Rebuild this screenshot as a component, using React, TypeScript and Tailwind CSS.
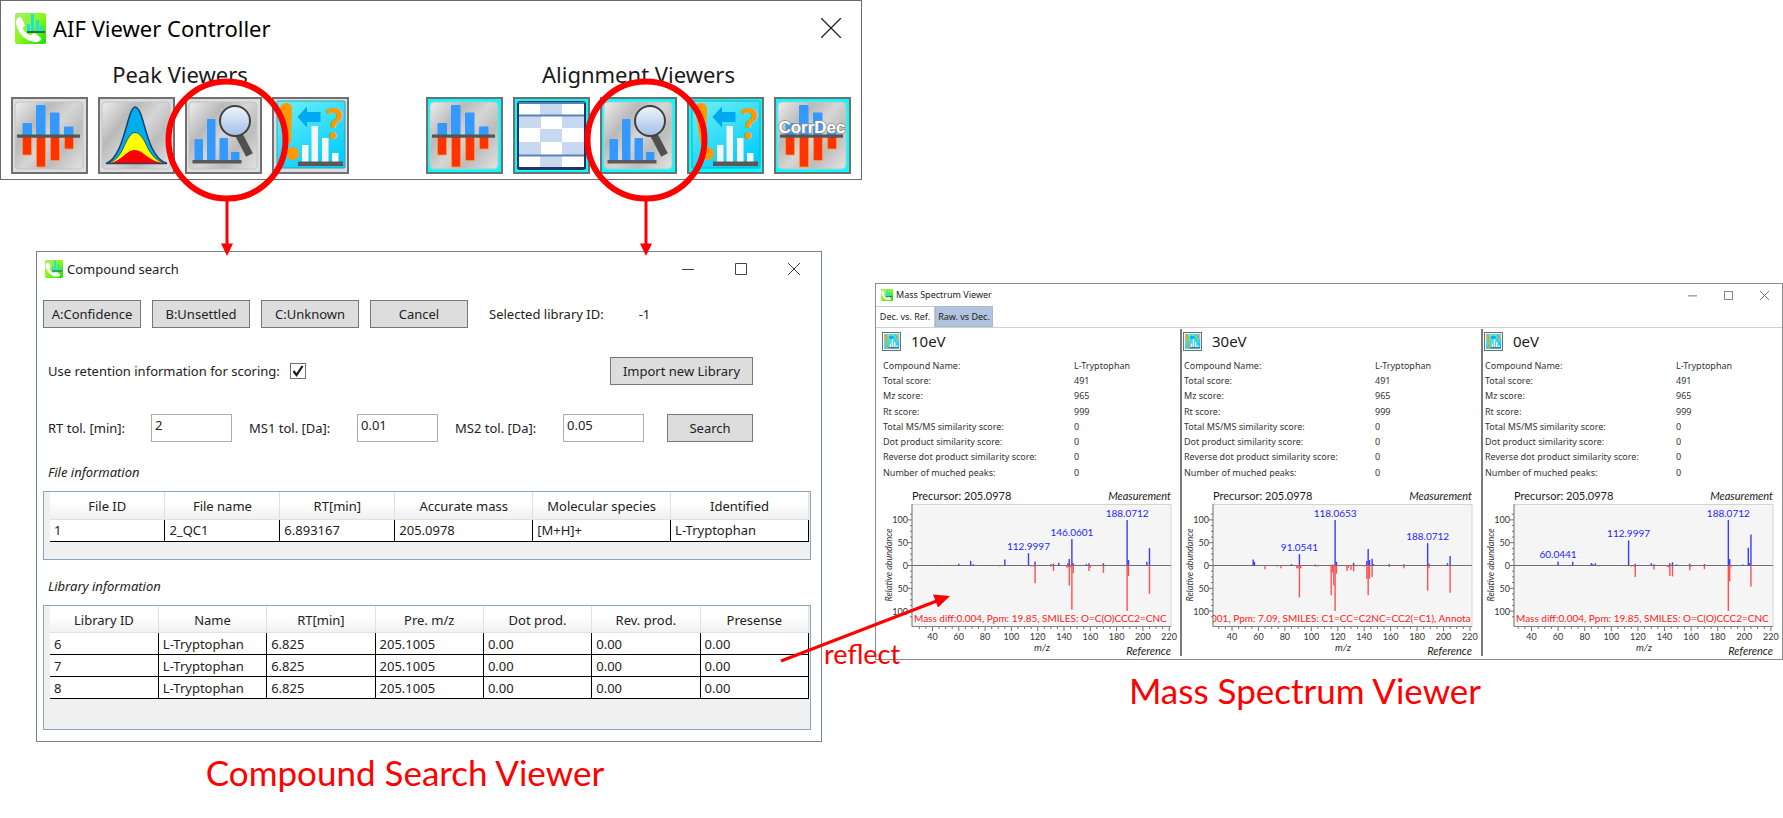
import React from "react";

const uiFont = "font-['Noto_Sans','Open_Sans',sans-serif]";
const captionFont = "font-['Lato','Open_Sans',sans-serif]";

/* ---------- Icons ---------- */

function AppIcon({ className }: { className: string }) {
  return (
    <svg viewBox="0 0 31 31" className={className} aria-hidden="true">
      <defs>
        <linearGradient id="appBg" x1="0" y1="0" x2="1" y2="1">
          <stop offset="0" stopColor="#a4f070" />
          <stop offset="0.5" stopColor="#8cf51c" />
          <stop offset="1" stopColor="#10e400" />
        </linearGradient>
      </defs>
      <rect width="31" height="31" rx="2" fill="url(#appBg)" />
      <path
        d="M2 6C4 3 6 4 7 6L10 12C10 14 7 14 8 16C10 20 13 22 16 22C18 22 18 19 20 20L26 25C27 27 24 29 21 29C11 29 2 20 1 9Z"
        fill="#ffffff"
      />
      <g fill="#17e3e3">
        <rect x="12" y="11" width="3" height="7" />
        <rect x="16" y="1" width="3" height="17" />
        <rect x="21" y="7" width="3" height="11" />
        <rect x="25" y="13" width="3" height="5" />
      </g>
      <rect x="12" y="18" width="18" height="2" fill="#2b6b4f" />
    </svg>
  );
}

function MetalPanel() {
  return (
    <>
      <defs>
        <linearGradient id="metal" x1="0" y1="0.1" x2="1" y2="0.9">
          <stop offset="0" stopColor="#e6e6e6" />
          <stop offset="0.28" stopColor="#b9b9b9" />
          <stop offset="0.5" stopColor="#d6d6d6" />
          <stop offset="0.72" stopColor="#bcbcbc" />
          <stop offset="1" stopColor="#dedede" />
        </linearGradient>
      </defs>
      <rect x="4" y="5" width="68" height="67" rx="4" fill="url(#metal)" stroke="#c4c4c4" strokeWidth="1" />
    </>
  );
}

function MirrorBars() {
  return (
    <>
      <g fill="#3399ff">
        <rect x="11.5" y="26" width="9.5" height="13" rx="1" />
        <rect x="25" y="8" width="9.5" height="31" rx="1" />
        <rect x="39" y="15.5" width="9.5" height="23" rx="1" />
        <rect x="53" y="29.5" width="9.5" height="9" rx="1" />
      </g>
      <g fill="#ff3300" stroke="#ff9a3d" strokeWidth="0.8">
        <rect x="11.5" y="39" width="9" height="19" rx="1" />
        <rect x="25.5" y="39" width="9" height="31" rx="1" />
        <rect x="39.5" y="39" width="9" height="24.5" rx="1" />
        <rect x="53.5" y="39" width="9" height="13" rx="1" />
      </g>
      <rect x="6" y="37.5" width="63" height="3.2" fill="#555555" />
    </>
  );
}

function SpectrumIcon() {
  return (
    <svg viewBox="0 0 77 77" className="size-full" aria-hidden="true">
      <MetalPanel />
      <MirrorBars />
    </svg>
  );
}

function PeakIcon() {
  return (
    <svg viewBox="0 0 77 77" className="size-full" aria-hidden="true">
      <MetalPanel />
      <path
        d="M8 66.500C20 62 25 42 30 24C33 13 35 10 37 10C39 10 42 13 45 24C50 42 55 62 69 66.500Z"
        fill="#00adee"
        stroke="#1f3d6e"
        strokeWidth="1.500"
      />
      <path
        d="M9 66.500C20 64 24 54 28 45C32 38 34 35.500 37 35.500C40 35.500 43 38 47 45C51 54 56 64 68 66.500Z"
        fill="#ffff00"
        stroke="#1f5a6e"
        strokeWidth="1"
      />
      <path d="M10 66.500C20 65 25 59 29 56C33 53 35 53 37 53C40 53 42 54 46 57C50 60 56 65 67 66.500Z" fill="#ff0000" />
      <rect x="8" y="65.500" width="61" height="1.500" fill="#1f3d6e" opacity="0.5" />
    </svg>
  );
}

function SearchIcon() {
  return (
    <svg viewBox="0 0 77 77" className="size-full" aria-hidden="true">
      <defs>
        <linearGradient id="lens" x1="0" y1="0" x2="0" y2="1">
          <stop offset="0" stopColor="#eff5fc" />
          <stop offset="1" stopColor="#a3bfe6" />
        </linearGradient>
      </defs>
      <MetalPanel />
      <g fill="#3399ff">
        <rect x="9.500" y="42" width="8.500" height="22" rx="1" />
        <rect x="22" y="22" width="8.500" height="42" rx="1" />
        <rect x="34.500" y="41" width="8.500" height="23" rx="1" />
        <rect x="46" y="55" width="8.500" height="9" rx="1" />
      </g>
      <rect x="7.500" y="63" width="49" height="3.500" fill="#5a5a5a" />
      <path d="M54 38L64.500 58" stroke="#505050" strokeWidth="7.500" />
      <circle cx="50" cy="24" r="15" fill="url(#lens)" stroke="#404040" strokeWidth="2" />
    </svg>
  );
}

function IdentifyIcon() {
  return (
    <svg viewBox="0 0 77 77" className="size-full" aria-hidden="true">
      <defs>
        <linearGradient id="aqua" x1="0" y1="0" x2="0.6" y2="1">
          <stop offset="0" stopColor="#6ef1f5" />
          <stop offset="1" stopColor="#08cdfc" />
        </linearGradient>
      </defs>
      <rect x="5" y="4" width="68" height="67" rx="1" fill="url(#aqua)" stroke="#2ba7b8" strokeWidth="1" />
      <path d="M8 12C8 4 20 4 20 12L19 44C18 48 14 48 13 44Z" fill="#ff9900" />
      <circle cx="20.500" cy="56.500" r="6.500" fill="#ff9900" />
      <path d="M25.500 20L35 9.500V15H48.500V25H35V30.500Z" fill="#00a8f0" />
      <g fill="#f5f5f5">
        <rect x="30" y="48" width="6.500" height="18" />
        <rect x="39.500" y="29" width="6.500" height="37" />
        <rect x="50" y="41" width="6.500" height="25" />
        <rect x="60" y="56" width="6.500" height="10" />
      </g>
      <rect x="26" y="64.500" width="45" height="4.500" fill="#585858" />
      <text x="62" y="42" textAnchor="middle" fill="#ff9900" className="font-['Lato',sans-serif] text-[42px] font-black">
        ?
      </text>
    </svg>
  );
}

function TableIcon() {
  const shaded = [
    [27, 6, 12],
    [6, 19, 12],
    [49, 19, 12],
    [27, 32, 13],
    [6, 45, 13],
    [49, 45, 13],
    [27, 59, 12],
  ];
  return (
    <svg viewBox="0 0 77 77" className="size-full" aria-hidden="true">
      <rect x="5" y="5" width="67" height="67" rx="2" fill="#ffffff" stroke="#1d3560" strokeWidth="2" />
      {shaded.map(([x, y, h]) => (
        <rect key={`${x}-${y}`} x={x} y={y} width="22" height={h} fill="#c6d9f1" />
      ))}
      <path d="M5 6H72M5 18.500H72M5 58.500H72" stroke="#5b82b5" strokeWidth="1.800" />
      <path d="M5 6V71H72V6" fill="none" stroke="#1d3560" strokeWidth="2" />
    </svg>
  );
}

function CorrDecIcon() {
  return (
    <svg viewBox="0 0 77 77" className="size-full" aria-hidden="true">
      <MetalPanel />
      <MirrorBars />
      <text
        x="38"
        y="36"
        textAnchor="middle"
        fill="#ffffff"
        stroke="#8a8a8a"
        strokeWidth="1.500"
        paintOrder="stroke"
        className="font-['Liberation_Sans',sans-serif] text-[17px] font-bold"
      >
        CorrDec
      </text>
    </svg>
  );
}

/* ---------- Annotations ---------- */

function Callout({ className }: { className: string }) {
  return (
    <svg
      viewBox="0 0 124 180"
      className={`pointer-events-none absolute z-10 h-[180px] w-[124px] max-w-none ${className}`}
      aria-hidden="true"
    >
      <circle cx="62" cy="62" r="58.500" fill="none" stroke="#ff0000" strokeWidth="6" />
      <path d="M62 122V167" stroke="#ff0000" strokeWidth="3" />
      <path d="M56 165.500H68L62 178Z" fill="#ff0000" />
    </svg>
  );
}

/* ---------- AIF Viewer Controller ---------- */

type Tool = { label: string; icon: React.ReactNode; callout?: string };

function ToolGroup({ title, tools, face }: { title: string; tools: Tool[]; face: string }) {
  return (
    <section className="flex flex-col items-center">
      <h2 className="mb-1 text-[22px] leading-[38px] text-[#1a1a1a]">{title}</h2>
      <div className="flex gap-2.5">
        {tools.map((tool) => (
          <div key={tool.label} className="relative size-[77px]">
            <button type="button" aria-label={tool.label} className={`block size-full border-2 border-[#707070] ${face}`}>
              <span className="-m-0.5 block">{tool.icon}</span>
            </button>
            {tool.callout && <Callout className={tool.callout} />}
          </div>
        ))}
      </div>
    </section>
  );
}

function ControllerWindow() {
  return (
    <section className="border border-[#6b6b6b] bg-white px-2.5 pb-[5px]">
      <header className="flex h-[54px] items-center gap-[7px] pr-2.5 pl-1">
        <AppIcon className="size-[31px]" />
        <h1 className="flex-1 text-[22px] text-black">AIF Viewer Controller</h1>
        <button type="button" aria-label="Close">
          <svg viewBox="0 0 20 20" className="size-5" aria-hidden="true">
            <path d="M0 0L20 20M20 0L0 20" stroke="#222222" strokeWidth="1.300" />
          </svg>
        </button>
      </header>
      <div className="flex justify-between">
        <ToolGroup
          title="Peak Viewers"
          face="bg-[#dddddd]"
          tools={[
            { label: "Spectrum", icon: <SpectrumIcon /> },
            { label: "Chromatogram", icon: <PeakIcon /> },
            { label: "Compound search", icon: <SearchIcon />, callout: "-top-[19px] -left-5" },
            { label: "Identification", icon: <IdentifyIcon /> },
          ]}
        />
        <ToolGroup
          title="Alignment Viewers"
          face="bg-[#00ffff]"
          tools={[
            { label: "Aligned spectrum", icon: <SpectrumIcon /> },
            { label: "Alignment table", icon: <TableIcon /> },
            { label: "Aligned compound search", icon: <SearchIcon />, callout: "-top-[19px] -left-4" },
            { label: "Aligned identification", icon: <IdentifyIcon /> },
            { label: "Correlation deconvolution", icon: <CorrDecIcon /> },
          ]}
        />
      </div>
    </section>
  );
}

/* ---------- Compound search ---------- */

function WindowButtons({ size, gap }: { size: string; gap: string }) {
  const glyphs: [string, string][] = [
    ["Minimize", "M0 6.500H12"],
    ["Maximize", "M0.500 0.500H11.500V11.500H0.500Z"],
    ["Close", "M0 0L12 12M12 0L0 12"],
  ];
  return (
    <div className={`flex ${gap}`}>
      {glyphs.map(([label, d]) => (
        <button key={label} type="button" aria-label={label}>
          <svg viewBox="0 0 12 12" className={`block ${size}`} aria-hidden="true">
            <path d={d} fill="none" stroke="#444444" strokeWidth="1" />
          </svg>
        </button>
      ))}
    </div>
  );
}

function PushButton({ children, width }: { children: React.ReactNode; width: string }) {
  return (
    <button type="button" className={`h-7 border border-[#777777] bg-[#dddddd] ${width}`}>
      {children}
    </button>
  );
}

function Tolerance({ id, label, value, width }: { id: string; label: string; value: string; width: string }) {
  return (
    <div className="flex items-center">
      <label htmlFor={id} className={width}>
        {label}
      </label>
      <input id={id} defaultValue={value} className="h-7 w-[81px] border border-[#abadb3] bg-white px-[3px] pb-1.5" />
    </div>
  );
}

function DataTable({
  title,
  columns,
  rows,
  footer,
}: {
  title: string;
  columns: [string, string][];
  rows: string[][];
  footer: string;
}) {
  return (
    <div className={`border border-[#8aa5bf] bg-[#f0f0f0] pr-px pl-1.5 ${footer}`}>
      <table aria-label={title} className="w-full table-fixed border-collapse bg-white">
        <thead>
          <tr className="h-[27px] bg-linear-to-b from-white from-40% to-[#eff0f3]">
            {columns.map(([name, width]) => (
              <th key={name} scope="col" className={`border-r border-b border-[#dfe0e2] pt-0.5 font-normal ${width}`}>
                {name}
              </th>
            ))}
          </tr>
        </thead>
        <tbody>
          {rows.map((row) => (
            <tr key={row[0]} className="h-[22px]">
              {row.map((cell, i) => (
                <td key={i} className="border-r border-b border-black px-1 py-0 leading-5">
                  {cell}
                </td>
              ))}
            </tr>
          ))}
        </tbody>
      </table>
    </div>
  );
}

function CompoundSearchWindow() {
  return (
    <section className="border border-[#7b8489] bg-white px-1.5 pb-[11px] text-[13px] leading-5 text-[#222222]">
      <header className="flex h-[33px] items-center gap-1 pr-[15px] pl-0.5">
        <AppIcon className="size-[18px]" />
        <h2 className="flex-1">Compound search</h2>
        <WindowButtons size="size-3" gap="gap-[41px]" />
      </header>

      <div className="mt-[15px] flex items-center gap-[11px]">
        <PushButton width="w-[98px]">A:Confidence</PushButton>
        <PushButton width="w-[98px]">B:Unsettled</PushButton>
        <PushButton width="w-[98px]">C:Unknown</PushButton>
        <PushButton width="w-[98px]">Cancel</PushButton>
        <p className="ml-2.5 flex gap-[35px]">
          <span>Selected library ID:</span>
          <span>-1</span>
        </p>
      </div>

      <div className="mt-[29px] flex items-center justify-between pr-[62px] pl-[5px]">
        <div className="flex items-center gap-2.5">
          <label htmlFor="use-rt">Use retention information for scoring:</label>
          <span className="relative flex">
            <input
              id="use-rt"
              type="checkbox"
              defaultChecked
              className="peer size-4 appearance-none border border-[#707070] bg-white"
            />
            <svg
              viewBox="0 0 16 16"
              className="pointer-events-none absolute inset-0 hidden size-4 peer-checked:block"
              aria-hidden="true"
            >
              <path d="M3.500 8L6.500 12L12.500 3" fill="none" stroke="#1a1a1a" strokeWidth="2.200" />
            </svg>
          </span>
        </div>
        <PushButton width="w-[143px]">Import new Library</PushButton>
      </div>

      <div className="mt-[29px] flex items-center gap-[17px] pr-[62px] pl-[5px]">
        <Tolerance id="rt-tol" label="RT tol. [min]:" value="2" width="w-[103px]" />
        <Tolerance id="ms1-tol" label="MS1 tol. [Da]:" value="0.01" width="w-[108px]" />
        <Tolerance id="ms2-tol" label="MS2 tol. [Da]:" value="0.05" width="w-[108px]" />
        <div className="ml-auto flex">
          <PushButton width="w-[86px]">Search</PushButton>
        </div>
      </div>

      <h3 className="mt-5 pl-[5px] italic">File information</h3>
      <div className="mt-[9px] mr-1">
        <DataTable
          title="File information"
          footer="pb-[17px]"
          columns={[
            ["File ID", "w-[15%]"],
            ["File name", "w-[15%]"],
            ["RT[min]", "w-[15%]"],
            ["Accurate mass", "w-[18%]"],
            ["Molecular species", "w-[18%]"],
            ["Identified", "w-[18%]"],
          ]}
          rows={[["1", "2_QC1", "6.893167", "205.0978", "[M+H]+", "L-Tryptophan"]]}
        />
      </div>

      <h3 className="mt-4 pl-[5px] italic">Library information</h3>
      <div className="mt-[9px] mr-1">
        <DataTable
          title="Library information"
          footer="pb-[30px]"
          columns={[
            ["Library ID", "w-[14%]"],
            ["Name", "w-[14%]"],
            ["RT[min]", "w-[14%]"],
            ["Pre. m/z", "w-[14%]"],
            ["Dot prod.", "w-[14%]"],
            ["Rev. prod.", "w-[14%]"],
            ["Presense", "w-[14%]"],
          ]}
          rows={["6", "7", "8"].map((id) => [id, "L-Tryptophan", "6.825", "205.1005", "0.00", "0.00", "0.00"])}
        />
      </div>
    </section>
  );
}

/* ---------- Mass Spectrum Viewer ---------- */

type Peak = [number, number];

type Spectrum = {
  id: string;
  energy: string;
  origin: number;
  scale: number;
  measured: Peak[];
  reference: Peak[];
  labels: [string, number, number][];
  note: string;
  noteX: number;
};

const spectra: Spectrum[] = [
  {
    id: "ce10",
    energy: "10eV",
    origin: 51.5,
    scale: 1.315,
    measured: [
      [43, 1], [45, 1], [60, 4], [69, 10], [71, 3], [85, 1], [95, 13], [102, 1], [113, 27], [118, 9], [122, 1], [130, 3],
      [132, 4], [136, 6], [143, 5], [144, 14], [146, 58], [147, 5], [157, 3], [159, 5], [170, 5], [188, 100], [189, 12],
      [199, 1], [203, 8], [205, 38],
    ],
    reference: [
      [91, 2], [115, 2], [117, 3], [118, 39], [130, 2], [132, 12], [142, 4], [143, 5], [144, 44], [145, 4], [146, 97],
      [147, 17], [159, 12], [160, 5], [170, 16], [188, 100], [189, 23], [205, 62],
    ],
    labels: [["112.9997", 113, 34], ["146.0601", 146, 65], ["188.0712", 188, 107]],
    note: "Mass diff:0.004, Ppm: 19.85, SMILES: O=C(O)CCC2=CNC",
    noteX: 33,
  },
  {
    id: "ce30",
    energy: "30eV",
    origin: 50,
    scale: 1.322,
    measured: [
      [42, 1], [46, 1], [56, 13], [57, 8], [85, 3], [91, 25], [103, 2], [116, 2], [118, 100], [119, 8], [132, 6],
      [142, 10], [143, 36], [144, 12], [146, 15], [147, 3], [159, 3], [170, 3], [188, 49], [189, 4], [203, 5], [205, 21],
    ],
    reference: [
      [63, 1], [65, 8], [74, 2], [77, 6], [89, 6], [90, 6], [91, 70], [92, 6], [103, 2], [105, 2], [115, 65], [116, 15],
      [117, 44], [118, 100], [119, 18], [127, 12], [128, 5], [130, 10], [132, 13], [140, 2], [142, 29], [143, 65],
      [144, 29], [146, 25], [159, 3], [170, 6], [188, 55], [189, 6], [205, 60],
    ],
    labels: [["91.0541", 91, 31], ["118.0653", 118, 107], ["188.0712", 188, 57]],
    note: "001, Ppm: 7.09, SMILES: C1=CC=C2NC=CC2(=C1), Annota",
    noteX: 29,
  },
  {
    id: "ce0",
    energy: "0eV",
    origin: 48.5,
    scale: 1.33,
    measured: [
      [60, 9], [69, 1], [71, 8], [85, 5], [86, 3], [88, 5], [113, 55], [118, 4], [121, 1], [130, 5], [132, 3], [144, 5],
      [146, 7], [149, 2], [159, 4], [170, 3], [188, 100], [189, 14], [199, 2], [203, 39], [204, 5], [205, 68],
    ],
    reference: [
      [91, 2], [115, 2], [117, 3], [118, 25], [132, 9], [142, 3], [143, 4], [144, 23], [146, 24], [159, 11], [160, 3],
      [170, 8], [188, 100], [189, 35], [190, 4], [205, 46],
    ],
    labels: [["60.0441", 60, 17], ["112.9997", 113, 62], ["188.0712", 188, 107]],
    note: "Mass diff:0.004, Ppm: 19.85, SMILES: O=C(O)CCC2=CNC",
    noteX: 33,
  },
];

const scores: [string, string][] = [
  ["Compound Name:", "L-Tryptophan"],
  ["Total score:", "491"],
  ["Mz score:", "965"],
  ["Rt score:", "999"],
  ["Total MS/MS similarity score:", "0"],
  ["Dot product similarity score:", "0"],
  ["Reverse dot product similarity score:", "0"],
  ["Number of muched peaks:", "0"],
];

const zeroY = 77.5;
const unitY = 0.456;

function MirrorPlot({ data }: { data: Spectrum }) {
  const px = (mz: number) => data.origin + (mz - 40) * data.scale;
  const xMinor = Array.from({ length: 39 }, (_, i) => 30 + i * 5).filter((v) => px(v) < 290);
  const xMajor = Array.from({ length: 10 }, (_, i) => 40 + i * 20);
  const yMinor = Array.from({ length: 19 }, (_, i) => -112.5 + i * 12.5);
  return (
    <svg
      viewBox="0 0 299 168"
      className={`block w-full overflow-visible text-[11px] ${captionFont}`}
      role="img"
      aria-label={`Mirror plot ${data.energy}`}
    >
      <defs>
        <clipPath id={`clip-${data.id}`}>
          <rect x="31" y="16" width="259" height="123" />
        </clipPath>
      </defs>
      <rect x="31" y="16.500" width="259" height="122" fill="#f5f5f5" stroke="#d4d4d4" />
      <path d="M31 16V138.500H290" fill="none" stroke="#808080" />
      {yMinor.map((v) => (
        <path key={v} d={`M${v % 50 === 0 ? 27 : 29} ${zeroY + v * unitY}H31`} stroke="#707070" strokeWidth="1" />
      ))}
      {xMinor.map((v) => (
        <path key={v} d={`M${px(v)} 139V${v % 20 === 0 ? 143 : 141}`} stroke="#707070" strokeWidth="1" />
      ))}
      <path d={`M31 ${zeroY}H290`} stroke="#707070" />

      <g stroke="#3a3aff" strokeWidth="1.400">
        {data.measured.map(([mz, h]) => (
          <path key={mz} d={`M${px(mz)} ${zeroY}V${zeroY - h * unitY}`} />
        ))}
      </g>
      <g stroke="#ff5050" strokeWidth="1.400">
        {data.reference.map(([mz, h]) => (
          <path key={mz} d={`M${px(mz)} ${zeroY}V${zeroY + h * unitY}`} />
        ))}
      </g>

      <g fill="#1f1fff" textAnchor="middle" className="text-[10px]">
        {data.labels.map(([text, mz, level]) => (
          <text key={text} x={px(mz)} y={zeroY - level * unitY}>
            {text}
          </text>
        ))}
      </g>
      <g clipPath={`url(#clip-${data.id})`}>
        <text x={data.noteX} y="134" fill="#ff1a1a" className="text-[10px]">
          {data.note}
        </text>
      </g>

      <g fill="#1a1a1a">
        <text x="31" y="12">
          Precursor: 205.0978
        </text>
        <text x="290" y="12" textAnchor="end" className="italic">
          Measurement
        </text>
        <text x="290" y="167" textAnchor="end" className="italic">
          Reference
        </text>
      </g>
      <g fill="#333333" className="text-[10px]">
        <text x="161" y="163" textAnchor="middle" className="italic">
          m/z
        </text>
        <text transform="translate(11 77) rotate(-90)" textAnchor="middle" className="text-[9px] italic">
          Relative abundance
        </text>
        {[-100, -50, 0, 50, 100].map((v) => (
          <text key={v} x="27" y={zeroY + 3.5 - v * unitY} textAnchor="end" className="text-[9px]">
            {Math.abs(v)}
          </text>
        ))}
        {xMajor.map((v) => (
          <text key={v} x={px(v)} y="152" textAnchor="middle" className="text-[9px]">
            {v}
          </text>
        ))}
      </g>
    </svg>
  );
}

function SpectrumPanel({ data, first }: { data: Spectrum; first: boolean }) {
  return (
    <section className={`border-l-2 ${first ? "border-transparent" : "border-[#7a7a7a]"}`}>
      <header className="flex items-center gap-2.5 pl-px">
        <span className="block size-[19px] border border-[#707070]">
          <IdentifyIcon />
        </span>
        <h3 className="text-[15px] leading-6 text-[#1a1a1a]">{data.energy}</h3>
      </header>
      <dl className="mt-[5px] grid h-[122px] grid-cols-[191fr_106fr] grid-rows-8 items-center pl-0.5 text-[9px] text-[#333333]">
        {scores.map(([name, value]) => (
          <React.Fragment key={name}>
            <dt>{name}</dt>
            <dd>{value}</dd>
          </React.Fragment>
        ))}
      </dl>
      <div className="mt-2">
        <MirrorPlot data={data} />
      </div>
    </section>
  );
}

function MassSpectrumWindow() {
  return (
    <section className="border border-[#8c8c8c] bg-white text-[#222222]">
      <header className="flex h-[22px] items-center gap-[3px] pr-[13px] pl-[5px]">
        <AppIcon className="size-3" />
        <h2 className="flex-1 text-[9px]">Mass Spectrum Viewer</h2>
        <WindowButtons size="size-[9px]" gap="gap-[27px]" />
      </header>
      <div role="tablist" className="flex h-[22px] border-b border-[#d0d0d0] text-[9px]">
        <button type="button" role="tab" aria-selected="false" className="w-[59px] border-t border-r border-[#c8c8c8] bg-white">
          Dec. vs. Ref.
        </button>
        <button type="button" role="tab" aria-selected="true" className="w-[58px] border border-[#a9b8cf] bg-[#b0c4de]">
          Raw. vs Dec.
        </button>
      </div>
      <div className="grid grid-cols-3 pt-px pb-[3px] pl-[3px]">
        {spectra.map((data, i) => (
          <SpectrumPanel key={data.id} data={data} first={i === 0} />
        ))}
      </div>
    </section>
  );
}

/* ---------- Page ---------- */

export default function App() {
  return (
    <main className={`grid min-h-screen grid-cols-[862fr_908fr] items-start gap-x-[13px] bg-white ${uiFont}`}>
      <div>
        <ControllerWindow />
        <div className="mt-[71px] mr-10 ml-9">
          <CompoundSearchWindow />
          <p className={`mt-2.5 pr-12 text-center text-[35px] leading-10 text-[#ff0000] ${captionFont}`}>
            Compound Search Viewer
          </p>
        </div>
      </div>
      <div className="relative mt-[283px]">
        <MassSpectrumWindow />
        <p className={`mt-2.5 pr-12 text-center text-[35px] leading-10 text-[#ff0000] ${captionFont}`}>
          Mass Spectrum Viewer
        </p>
        <svg
          viewBox="0 0 170 75"
          className="pointer-events-none absolute top-[308px] -left-[95px] h-[75px] w-[170px]"
          aria-hidden="true"
        >
          <path d="M1 70L158 9.500" stroke="#ff0000" strokeWidth="3" />
          <path d="M153 3.500L170 5L158 16.500Z" fill="#ff0000" />
        </svg>
        <span className={`absolute top-[355px] -left-[51px] text-[27px] leading-8 text-[#ff0000] ${captionFont}`}>
          reflect
        </span>
      </div>
    </main>
  );
}
